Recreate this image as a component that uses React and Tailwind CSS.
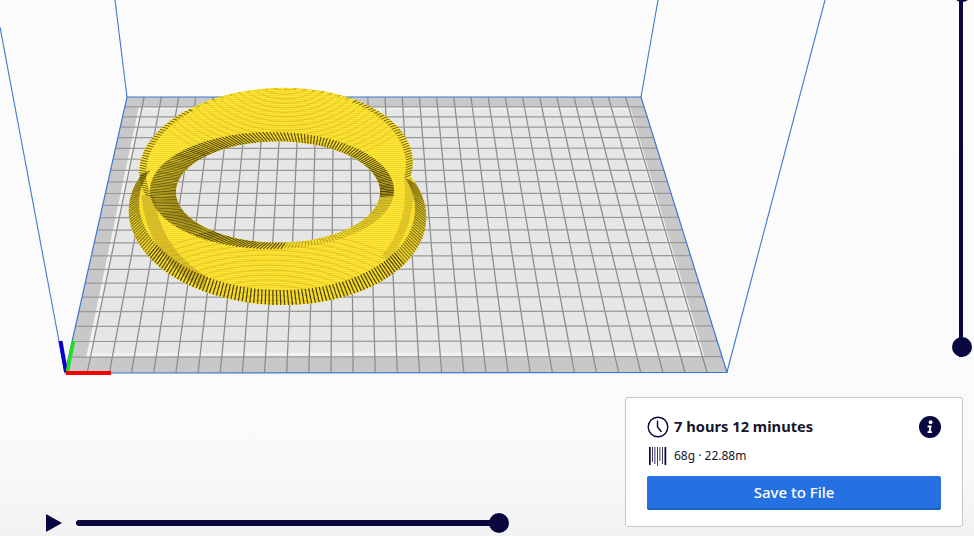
import React from "react";

const Q = [[127, 97], [641, 97], [727, 372.5], [65, 373]];

function makeH() {
  const [[x0, y0], [x1, y1], [x2, y2], [x3, y3]] = Q;
  const dx1 = x1 - x2, dx2 = x3 - x2, sx = x0 - x1 + x2 - x3;
  const dy1 = y1 - y2, dy2 = y3 - y2, sy = y0 - y1 + y2 - y3;
  const d = dx1 * dy2 - dx2 * dy1;
  const g = (sx * dy2 - dx2 * sy) / d;
  const h = (dx1 * sy - sx * dy1) / d;
  const a = x1 - x0 + g * x1, b = x3 - x0 + h * x3, c = x0;
  const e = y1 - y0 + g * y1, f = y3 - y0 + h * y3, k = y0;
  return (u, v) => {
    const w = g * u + h * v + 1;
    return [(a * u + b * v + c) / w, (e * u + f * v + k) / w];
  };
}
const H = makeH();
const poly = (u0, v0, u1, v1) =>
  [H(u0, v0), H(u1, v0), H(u1, v1), H(u0, v1)].map((p) => p.map((n) => n.toFixed(2)).join(",")).join(" ");

const COLS = 29.9;
const ROWS = 22;

function Bed() {
  const bu = 0.027, bv = 1 / ROWS;
  const lines = [];
  for (let i = 1; i < COLS; i++) {
    const u = i / COLS;
    const [a, b] = [H(u, 0), H(u, 1)];
    lines.push(<line key={"c" + i} x1={a[0]} y1={a[1]} x2={b[0]} y2={b[1]} stroke="#8c8c8c" strokeWidth="1.25" />);
  }
  for (let i = 1; i < ROWS; i++) {
    const v = i / ROWS;
    const [a, b] = [H(0, v), H(1, v)];
    lines.push(<line key={"r" + i} x1={a[0]} y1={a[1]} x2={b[0]} y2={b[1]} stroke="#989898" strokeWidth="1.2" />);
  }
  return (
    <g>
      <polygon points={poly(0, 0, 1, 1)} fill="#c8c8c8" />
      <polygon points={poly(bu, bv, 1 - bu, 1 - bv)} fill="#f1f1f1" />
      <polygon points={poly(bu + 0.007, bv + 0.012, 1 - bu - 0.007, 1 - bv - 0.012)} fill="#e6e6e6" />
      {lines}
      <polygon points={poly(0, 0, 1, 1)} fill="none" stroke="#3f78cf" strokeWidth="1.2" />
    </g>
  );
}

function Frame() {
  const segs = [
    [0, 27, 65, 373],
    [115, 0, 127, 97],
    [658, 0, 641, 97],
    [825, 0, 727, 372],
  ];
  return (
    <g>
      {segs.map((s, i) => (
        <line key={i} x1={s[0]} y1={s[1]} x2={s[2]} y2={s[3]} stroke="#3f78cf" strokeWidth="1.1" />
      ))}
    </g>
  );
}

const pt = (E, deg) => {
  const t = (deg * Math.PI) / 180, r = ((E.r || 0) * Math.PI) / 180;
  const x = E.rx * Math.cos(t), y = E.ry * Math.sin(t);
  return [E.cx + x * Math.cos(r) - y * Math.sin(r), E.cy + x * Math.sin(r) + y * Math.cos(r)];
};

const El = ({ E, ...rest }) => (
  <ellipse cx={E.cx} cy={E.cy} rx={E.rx} ry={E.ry} transform={`rotate(${E.r || 0} ${E.cx} ${E.cy})`} {...rest} />
);

function Stripes({ A, B, from, to, step, width = 1.4, opacity }) {
  const out = [];
  for (let d = from, i = 0; d <= to; d += step, i++) {
    const a = pt(A, d), b = pt(B, d);
    const op = typeof opacity === "function" ? opacity(d) : opacity ?? 1;
    out.push(<line key={i} x1={a[0]} y1={a[1]} x2={b[0]} y2={b[1]} stroke="#3d3205" strokeWidth={width} strokeOpacity={op} />);
  }
  return <g>{out}</g>;
}

function Ring() {
  const E1 = { cx: 277.5, cy: 214, rx: 149, ry: 91, r: 2 };
  const E1i = { cx: 277, cy: 206, rx: 138, ry: 84, r: 2 };
  const Et = { cx: 276, cy: 167, rx: 137, ry: 79, r: -3 };
  const Eti = { cx: 276, cy: 169, rx: 130, ry: 79.5, r: -3 };
  const Eh = { cx: 278, cy: 192, rx: 102, ry: 50.5, r: 0 };
  const Eb = { cx: 272, cy: 190.5, rx: 122, ry: 58.5, r: 0 };

  const waves = [];
  for (let k = 1; k < 22; k++) {
    waves.push(<ellipse key={"a" + k} cx="285" cy="72" rx={k * 7} ry={k * 4.5} fill="none" stroke="#d2b31a" strokeWidth="1" strokeOpacity="0.6" />);
    waves.push(<ellipse key={"b" + k} cx="268" cy="335" rx={k * 9} ry={k * 5} fill="none" stroke="#d2b31a" strokeWidth="1" strokeOpacity="0.6" />);
  }
  return (
    <g>
      <defs>
        <pattern id="fine" width="2" height="2" patternUnits="userSpaceOnUse">
          <rect width="2" height="2" fill="#fde634" />
          <rect y="1" width="2" height="1" fill="#f4d82b" />
        </pattern>
        <mask id="ring" maskUnits="userSpaceOnUse" x="0" y="0" width="974" height="536">
          <El E={E1} fill="#fff" />
          <El E={Et} fill="#fff" />
          <El E={Eh} fill="#000" />
        </mask>
      </defs>
      <g mask="url(#ring)">
        <rect x="100" y="70" width="350" height="250" fill="url(#fine)" />
        {waves}
        <path d="M148 195 C150 228 168 262 205 283" fill="none" stroke="#a88a18" strokeWidth="13" strokeOpacity="0.4" />
        <path d="M408 178 C412 205 405 235 385 258" fill="none" stroke="#a88a18" strokeWidth="8" strokeOpacity="0.3" />
        <Stripes
          A={E1}
          B={E1i}
          from={-22}
          to={202}
          step={1.5}
          width={1.25}
          opacity={(d) => (d > 30 && d < 150 ? 0.9 : 0.6)}
        />
        <Stripes A={Et} B={Eti} from={165} to={232} step={1.8} width={1} opacity={0.7} />
        <Stripes A={Et} B={Eti} from={232} to={308} step={4} width={1} opacity={0.4} />
        <Stripes A={Et} B={Eti} from={308} to={372} step={1.8} width={1} opacity={0.7} />
        <Stripes
          A={Eb}
          B={Eh}
          from={0}
          to={360}
          step={1.65}
          width={1.15}
          opacity={(d) => (d > 5 && d < 85 ? 0.3 : d > 130 && d < 215 ? 0.7 : 0.85)}
        />
      </g>
    </g>
  );
}

function Axes() {
  return (
    <g strokeLinecap="butt">
      <line x1="60.5" y1="341" x2="66" y2="372" stroke="#0a00c8" strokeWidth="4" />
      <line x1="73.5" y1="341" x2="67.5" y2="371" stroke="#1fe01f" strokeWidth="3.5" />
      <line x1="66" y1="373" x2="111" y2="373" stroke="#f40000" strokeWidth="4" />
    </g>
  );
}

function ClockIcon() {
  return (
    <svg width="22" height="22" viewBox="0 0 22 22" fill="none" stroke="#08073f" className="shrink-0">
      <circle cx="11" cy="11" r="9.8" strokeWidth="1.4" />
      <path d="M10.5 4.5V11L14.5 16" strokeWidth="1.4" />
    </svg>
  );
}

function InfoIcon() {
  return (
    <svg width="22" height="22" viewBox="0 0 22 22" className="shrink-0">
      <circle cx="11" cy="11" r="11" fill="#08073f" />
      <circle cx="11.6" cy="6.2" r="1.9" fill="#fff" />
      <path d="M8.6 9.6H12.6L11.6 15.2H13V17H8.6V15.2H9.7L10.4 11.4H8.6Z" fill="#fff" />
    </svg>
  );
}

function MaterialIcon() {
  const bars = [
    [2, 1.7, 18], [5, 0.8, 15], [7.5, 0.8, 17], [10, 0.8, 19], [12.5, 0.8, 14], [15, 0.8, 17], [17.5, 1.7, 18],
  ];
  return (
    <svg width="20" height="20" viewBox="0 0 20 20" className="shrink-0">
      {bars.map(([x, w, h], i) => (
        <rect key={i} x={x} y="1" width={w} height={h} fill="#08073f" />
      ))}
    </svg>
  );
}

export default function App() {
  return (
    <div
      className="relative w-[974px] h-[536px] overflow-hidden bg-linear-to-b from-[#fcfcfc] via-[#fafafa] via-85% to-[#f2f2f2]"
      style={{ fontFamily: '"Noto Sans", sans-serif' }}
    >
      <svg className="absolute inset-0" width="974" height="536" viewBox="0 0 974 536">
        <Frame />
        <Bed />
        <Ring />
        <Axes />
      </svg>

      <div className="absolute left-[959px] top-[-16px] w-[4px] h-[373px]">
        <div className="absolute left-[-7.5px] top-[-2px] w-[20px] h-[20px] rounded-full bg-[#08073f]" />
        <div className="w-[4px] h-full bg-[#08073f]" />
        <div className="absolute left-[-7.5px] bottom-0 w-[20px] h-[20px] rounded-full bg-[#08073f]" />
      </div>

      <div className="absolute left-[46px] bottom-[4px] flex items-center gap-[14px]">
        <svg width="16" height="18" viewBox="0 0 16 18" className="shrink-0">
          <path d="M0 0L16 9L0 18Z" fill="#08073f" />
        </svg>
        <div className="relative w-[423px] h-[6px] rounded-full bg-[#08073f]">
          <div className="absolute right-[-10px] top-[-7px] w-[20px] h-[20px] rounded-full bg-[#08073f]" />
        </div>
      </div>

      <div className="absolute left-[625px] top-[397px] w-[338px] h-[130px] bg-white border border-[#c8c8c8] rounded-[3px] px-[21px] pt-[18px] flex flex-col">
        <div className="flex items-center h-[22px]">
          <ClockIcon />
          <span className="ml-[5px] text-[14.7px] leading-[20px] mb-[2px] font-bold text-[#15152a]">7 hours 12 minutes</span>
          <div className="ml-auto">
            <InfoIcon />
          </div>
        </div>
        <div className="flex items-center h-[20px] mt-[8px]">
          <MaterialIcon />
          <span className="ml-[7px] text-[12px] leading-[20px] text-[#15152a]">68g · 22.88m</span>
        </div>
        <button className="mt-[10px] h-[34px] w-full rounded-[2px] bg-[#2671e2] border-b-2 border-[#1e5fc4] text-white text-[15px] font-medium leading-[32px]">
          Save to File
        </button>
      </div>
    </div>
  );
}
